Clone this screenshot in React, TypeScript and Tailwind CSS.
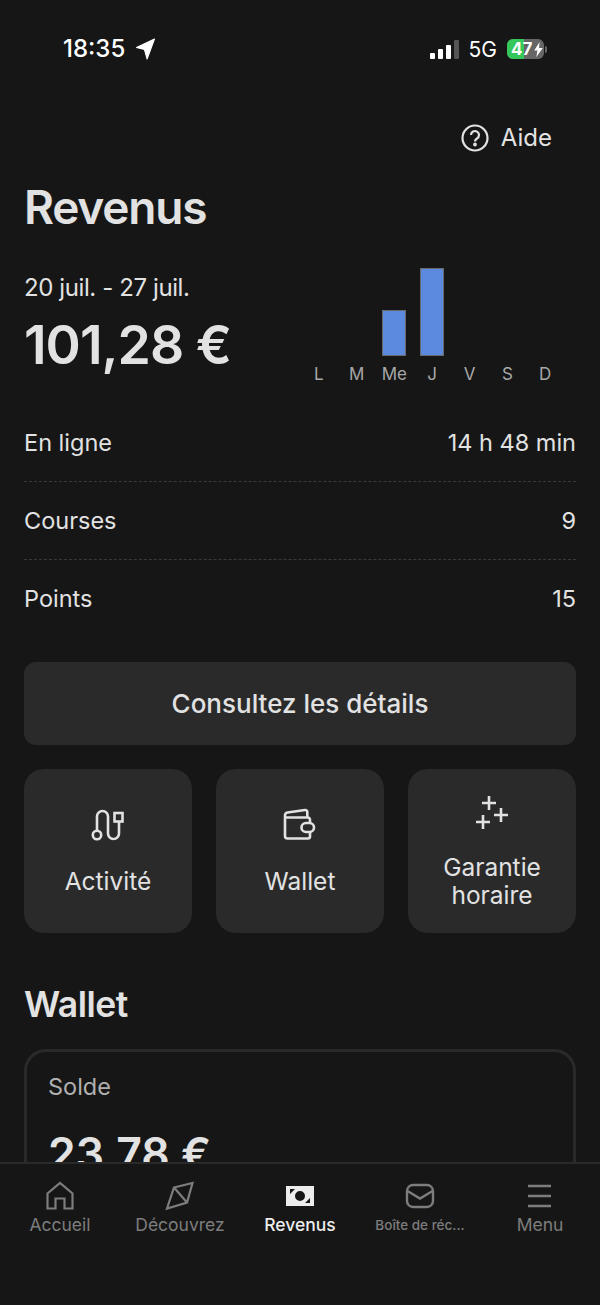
import React from 'react';

const days = [
  { label: 'L', height: 0 },
  { label: 'M', height: 0 },
  { label: 'Me', height: 46 },
  { label: 'J', height: 88 },
  { label: 'V', height: 0 },
  { label: 'S', height: 0 },
  { label: 'D', height: 0 },
];

const stats = [
  { label: 'En ligne', value: '14 h 48 min' },
  { label: 'Courses', value: '9' },
  { label: 'Points', value: '15' },
];

const ActivityIcon = () => (
  <svg width="36" height="36" viewBox="0 0 36 36" fill="none" stroke="#e2e2e2" strokeWidth="2.6">
    <circle cx="7" cy="28" r="4.2" />
    <path d="M7 24V9.5a5.5 5.5 0 0 1 11 0V26.5a5.5 5.5 0 0 0 11 0V15" />
    <rect x="24.5" y="6" width="8" height="8.5" />
  </svg>
);

const WalletIcon = () => (
  <svg width="36" height="36" viewBox="0 0 36 36" fill="none" stroke="#e2e2e2" strokeWidth="2.6" strokeLinejoin="round">
    <path d="M3 8.5V29a2.5 2.5 0 0 0 2.5 2.5H26a2 2 0 0 0 2-2V25M28 16v-3a2.5 2.5 0 0 0-2.5-2.5H3M3 8.5a3 3 0 0 1 2.5-3L23 3a2 2 0 0 1 2.3 2V10" />
    <rect x="19.5" y="16" width="12.5" height="9" rx="4.5" />
  </svg>
);

const PlusIcon = () => (
  <svg width="36" height="36" viewBox="0 0 36 36" fill="none" stroke="#e2e2e2" strokeWidth="2.6">
    <path d="M15 2v14M8 9h14M27 14v14M20 21h14M9 21v14M2 28h14" />
  </svg>
);

const HomeIcon = () => (
  <svg width="30" height="30" viewBox="0 0 30 30" fill="none" stroke="#7d7d7d" strokeWidth="2.2">
    <path d="M2.500 27.500V12.500L15 2l12.500 10.500v15H19.500V17.500h-9v10z" />
  </svg>
);

const CompassIcon = () => (
  <svg width="30" height="30" viewBox="0 0 30 30" fill="none" stroke="#7d7d7d" strokeWidth="2.2">
    <path d="M9 6.500 27.500 2 22 21.500 2 27.500z M9 6.500 22 21.500" />
  </svg>
);

const MoneyIcon = () => (
  <svg width="28" height="20" viewBox="0 0 28 20">
    <path fillRule="evenodd" fill="#ececec" d="M0 0h28v20H0zM14 5a5 5 0 1 0 0 10 5 5 0 0 0 0-10zM4 3v5l5-5zM24 17v-5l-5 5z" />
  </svg>
);

const MailIcon = () => (
  <svg width="30" height="26" viewBox="0 0 30 26" fill="none" stroke="#7d7d7d" strokeWidth="2.4">
    <rect x="2" y="2" width="26" height="22" rx="6" />
    <path d="M2.500 8 15 15.500 27.500 8" />
  </svg>
);

const MenuIcon = () => (
  <svg width="26" height="24" viewBox="0 0 26 24" fill="none" stroke="#7d7d7d" strokeWidth="2.600">
    <path d="M1 2h23M1 12h23M1 22h23" />
  </svg>
);

const tabs = [
  { label: 'Accueil', icon: <HomeIcon />, cls: 'text-[17.500px] text-[#7d7d7d]' },
  { label: 'Découvrez', icon: <CompassIcon />, cls: 'text-[17.500px] text-[#7d7d7d]' },
  { label: 'Revenus', icon: <MoneyIcon />, cls: 'text-[17.500px] font-medium text-[#ececec]' },
  { label: 'Boîte de réc...', icon: <MailIcon />, cls: 'text-[13.500px] font-medium text-[#7d7d7d]' },
  { label: 'Menu', icon: <MenuIcon />, cls: 'text-[17.500px] text-[#7d7d7d]' },
];

const StatusBar = () => (
  <div className="flex h-[96px] items-start justify-between pl-[63px] pr-[53px] pt-[33px] text-white">
    <div className="flex items-center gap-[11px]">
      <span className="text-[24px] font-medium leading-[32px]">18:35</span>
      <svg width="19" height="22" viewBox="0 0 18 20" fill="#fff">
        <path d="M17.500 0.500 10.500 19.500 8 10.500 0.500 8.500z" strokeLinejoin="round" stroke="#fff" />
      </svg>
    </div>
    <div className="flex h-[32px] items-center">
      <div className="flex items-end gap-[3px]">
        <span className="h-[6px] w-[5px] rounded-[1px] bg-white" />
        <span className="h-[10px] w-[5px] rounded-[1px] bg-white" />
        <span className="h-[14px] w-[5px] rounded-[1px] bg-white" />
        <span className="h-[19px] w-[5px] rounded-[1px] bg-[#555]" />
      </div>
      <span className="ml-[10px] text-[21px] leading-none">5G</span>
      <div className="relative ml-[10px] flex h-[20px] w-[37px] overflow-hidden rounded-[6px] bg-[#666]">
        <span className="h-full w-[17px] bg-[#34c759]" />
        <div className="absolute inset-0 flex items-center pl-[4px] text-[17px] font-bold leading-none">
          47
          <svg width="9" height="15" viewBox="0 0 8 14" fill="#fff" className="ml-[2px]"><path d="M5 0 0 8h3l-1 6 6-8.500H4.500z" /></svg>
        </div>
      </div>
      <span className="ml-[1px] h-[7px] w-[2px] rounded-r-full bg-[#666]" />
    </div>
  </div>
);

export default function App() {
  return (
    <div className="flex h-[1305px] w-[600px] flex-col overflow-hidden bg-[#161616] font-['Inter',sans-serif] text-[#e2e2e2]">
      <div className="h-[1162px] shrink-0 overflow-hidden">
        <StatusBar />

        <div className="flex h-[83px] items-start justify-end gap-[12px] pr-[48px] pt-[27px]">
          <svg width="28" height="28" viewBox="0 0 28 28" fill="none" stroke="#e2e2e2" strokeWidth="2.200" className="mt-[1px]">
            <circle cx="14" cy="14" r="12.500" />
            <path d="M10 11a4 4 0 1 1 6 3.500c-1.300.8-2 1.500-2 3" />
            <circle cx="14" cy="20.500" r="0.800" fill="#e2e2e2" />
          </svg>
          <span className="text-[24px] leading-[30px]">Aide</span>
        </div>

        <div className="px-[24px]">
          <h1 className="text-[46px] font-semibold leading-[56px] tracking-[-1.200px]">Revenus</h1>

          <div className="mt-[32px] flex h-[120px] items-start justify-between pr-[12px]">
            <div className="pt-[5px]">
              <div className="text-[24px] leading-[32px] tracking-[-0.400px]">20 juil. - 27 juil.</div>
              <div className="mt-[10px] text-[53.500px] font-semibold leading-[62px] tracking-[-1px]">101,28 €</div>
            </div>
            <div className="grid w-[264px] grid-cols-7">
              {days.map((d) => (
                <div key={d.label} className="flex h-[117px] flex-col items-center justify-end">
                  {d.height > 0 && (
                    <div className="w-[24px] border border-[#6a6a6a] bg-[#5b8ade]" style={{ height: d.height }} />
                  )}
                  <span className="mt-[8px] text-[17px] leading-[20px] text-[#a8a8a8]">{d.label}</span>
                </div>
              ))}
            </div>
          </div>

          <div className="mt-[17px]">
            {stats.map((s, i) => (
              <div
                key={s.label}
                className={`flex h-[78px] items-center justify-between border-b border-dashed text-[23.500px] ${i < 2 ? 'border-[#3a3a3a]' : 'border-transparent'}`}
              >
                <span>{s.label}</span>
                <span>{s.value}</span>
              </div>
            ))}
          </div>

          <button className="mt-[24px] flex h-[83px] w-full items-center justify-center rounded-[12px] bg-[#2a2a2a] text-[26px] font-medium text-[#e2e2e2]">
            Consultez les détails
          </button>

          <div className="mt-[24px] grid grid-cols-3 gap-[24px]">
            <div className="flex h-[164px] flex-col items-center rounded-[20px] bg-[#2a2a2a] pt-[38px]">
              <ActivityIcon />
              <span className="mt-[22px] text-[24.500px] leading-[32px]">Activité</span>
            </div>
            <div className="flex h-[164px] flex-col items-center rounded-[20px] bg-[#2a2a2a] pt-[38px]">
              <WalletIcon />
              <span className="mt-[22px] text-[24.500px] leading-[32px]">Wallet</span>
            </div>
            <div className="flex h-[164px] flex-col items-center rounded-[20px] bg-[#2a2a2a] pt-[25px]">
              <PlusIcon />
              <span className="mt-[23px] text-center text-[24.500px] leading-[28px]">Garantie<br />horaire</span>
            </div>
          </div>

          <h2 className="mt-[51px] text-[35.500px] font-semibold leading-[42px] tracking-[-0.500px]">Wallet</h2>

          <div className="mt-[23px] h-[200px] rounded-[22px] border-[3px] border-[#2a2a2a] px-[21px] pt-[20px]">
            <div className="text-[23.500px] leading-[30px] text-[#b0b0b0]">Solde</div>
            <div className="mt-[23px] text-[44.500px] font-semibold leading-[58px]">23,78 €</div>
          </div>
        </div>
      </div>

      <nav className="grid flex-1 grid-cols-5 border-t-2 border-[#2a2a2a] bg-[#161616] pt-[17px]">
        {tabs.map((t) => (
          <div key={t.label} className="flex flex-col items-center">
            <div className="flex h-[30px] items-center justify-center">{t.icon}</div>
            <span className={`mt-[2px] whitespace-nowrap leading-[24px] ${t.cls}`}>{t.label}</span>
          </div>
        ))}
      </nav>
    </div>
  );
}
